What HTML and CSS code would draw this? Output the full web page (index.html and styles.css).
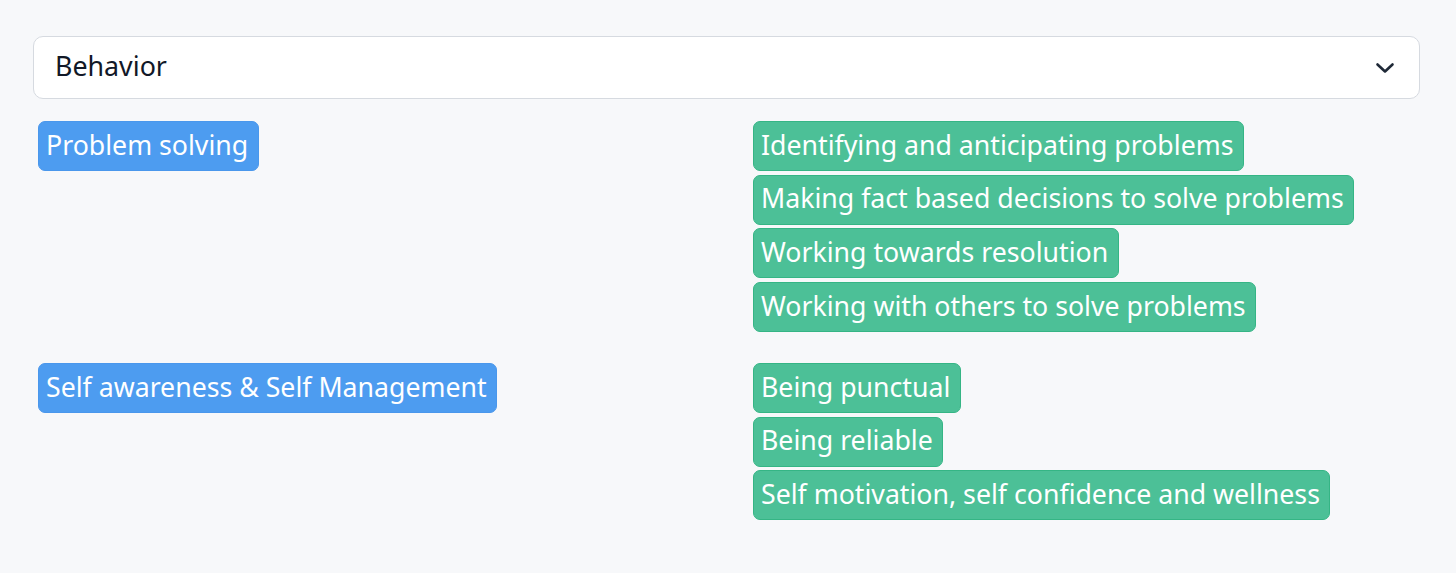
FILE: index.html
```html
<!DOCTYPE html>
<html>
<head>
<meta charset="utf-8">
<link rel="stylesheet" href="styles.css">
</head>
<body>
<div class="page">
  <div class="select">
    <span class="select-value">Behavior</span>
    <svg class="chevron" width="20" height="12" viewBox="0 0 20 12"><path d="M2.5 2.5 L10 9.5 L17.5 2.5" fill="none" stroke="#1f2937" stroke-width="2.6" stroke-linecap="round" stroke-linejoin="round"/></svg>
  </div>
  <div class="groups">
    <div class="group">
      <div class="col"><span class="tag blue">Problem solving</span></div>
      <div class="col">
        <span class="tag green">Identifying and anticipating problems</span>
        <span class="tag green">Making fact based decisions to solve problems</span>
        <span class="tag green">Working towards resolution</span>
        <span class="tag green">Working with others to solve problems</span>
      </div>
    </div>
    <div class="group">
      <div class="col"><span class="tag blue">Self awareness &amp; Self Management</span></div>
      <div class="col">
        <span class="tag green">Being punctual</span>
        <span class="tag green">Being reliable</span>
        <span class="tag green">Self motivation, self confidence and wellness</span>
      </div>
    </div>
  </div>
</div>
</body>
</html>
```

FILE: styles.css
```css
html, body {
  margin: 0;
  padding: 0;
  background: #f7f8fa;
  font-family: "Noto Sans", "Open Sans", sans-serif;
}
.page {
  padding: 36px 36px 0 33px;
}
.select {
  box-sizing: border-box;
  height: 63px;
  background: #ffffff;
  border: 1.5px solid #d6dae0;
  border-radius: 10px;
  display: flex;
  align-items: center;
  justify-content: space-between;
  padding: 0 24px 5px 21px;
}
.select-value {
  font-size: 26.8px;
  color: #111827;
}
.chevron {
  display: block;
  margin-top: 5px;
}
.groups {
  display: flex;
  flex-direction: column;
  gap: 31px;
  padding: 22px 0 0 5px;
}
.group {
  display: grid;
  grid-template-columns: 715px 1fr;
}
.col {
  display: flex;
  flex-direction: column;
  align-items: flex-start;
  gap: 3.7px;
}
.tag {
  box-sizing: border-box;
  height: 50px;
  display: inline-flex;
  align-items: center;
  padding: 0 9.5px 4px 7px;
  border-radius: 7px;
  color: #ffffff;
  font-size: 26.7px;
  white-space: nowrap;
}
.blue {
  background: #4d9cf0;
  border: 1px solid #4a97ec;
}
.green {
  background: #4cc097;
  border: 1px solid #35b585;
}
```
